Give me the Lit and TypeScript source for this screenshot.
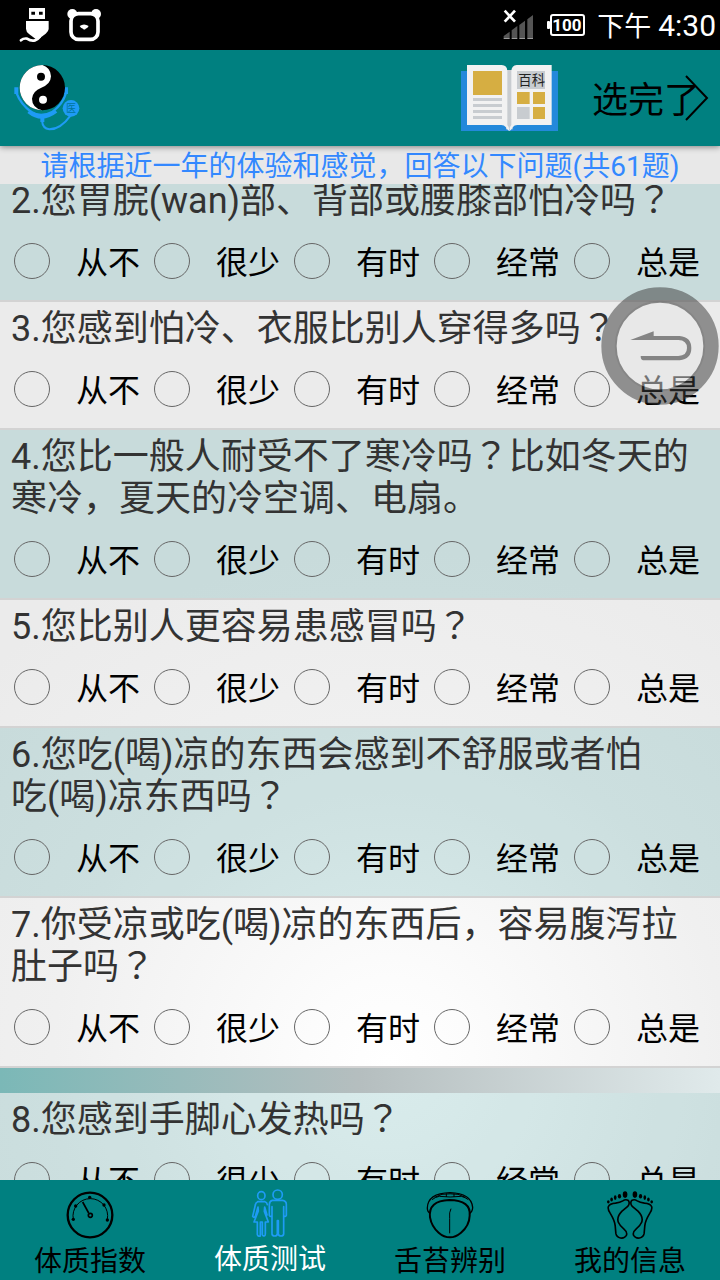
import { LitElement, html, svg, css } from "lit";
import { customElement, state, query } from "lit/decorators.js";
import { classMap } from "lit/directives/class-map.js";

interface Question {
  no: number;
  text: string;
  group?: boolean;
}

const OPTIONS = ["从不", "很少", "有时", "经常", "总是"];

const QUESTIONS: Question[] = [
  { no: 2, text: "您胃脘(wan)部、背部或腰膝部怕冷吗？" },
  { no: 3, text: "您感到怕冷、衣服比别人穿得多吗？" },
  { no: 4, text: "您比一般人耐受不了寒冷吗？比如冬天的寒冷，夏天的冷空调、电扇。" },
  { no: 5, text: "您比别人更容易患感冒吗？" },
  { no: 6, text: "您吃(喝)凉的东西会感到不舒服或者怕\n吃(喝)凉东西吗？" },
  { no: 7, text: "你受凉或吃(喝)凉的东西后，容易腹泻拉肚子吗？" },
  { no: 8, text: "您感到手脚心发热吗？", group: true },
];

/** Sets question marks in the middle of their em square. */
const centred = (text: string) =>
  text.split(/(？)/).map((part) => (part === "？" ? html`<span class="mark">${part}</span>` : part));

const usbIcon = svg`<svg width="30" height="34" viewBox="57 24 90 102" aria-hidden="true">
  <path fill="#fff" fill-rule="evenodd" d="M87 24h48v33H87zM94 35v9h11v-9zM117 35v9h11v-9z"/>
  <path fill="#fff" d="M78 63h68v24q0 6-9 14l-22 17-8-1-20-15q-9-7-9-16z"/>
  <path fill="none" stroke="#fff" stroke-width="8" stroke-linecap="round" d="M63 121q8-7 18-5 12 8 24 5 8-2 14-10"/>
</svg>`;

const bearIcon = svg`<svg width="34" height="34" viewBox="200 26 102 100" aria-hidden="true">
  <circle cx="216" cy="43" r="15" fill="#fff"/><circle cx="287" cy="43" r="15" fill="#fff"/>
  <rect x="212" y="42" width="81" height="77" rx="22" fill="#000" stroke="#fff" stroke-width="11"/>
  <path fill="#fff" d="M238 79q13-9 27 0-3 6-9 8-4 5-8 0-7-2-10-8z"/>
</svg>`;

const signalIcon = svg`<svg width="32" height="32" viewBox="188 28 96 96" aria-hidden="true">
  <g fill="#555"><path d="M190 114v-5l18-13v18zM214 114V92l17-13v35zM237 114V76l17-13v51zM261 114V59l17-13v68z"/></g>
  <path d="M190 116h18M214 116h17M237 116h17M261 116h17" stroke="#bbb" stroke-width="3"/>
  <path d="M193 33l31 33M224 33l-31 33" stroke="#fff" stroke-width="8"/>
</svg>`;

const batteryIcon = svg`<svg width="38" height="24" viewBox="0 0 38 24" aria-hidden="true">
  <rect x="4" y="2" width="33" height="20" rx="2" fill="none" stroke="#fff" stroke-width="2"/>
  <rect x="0" y="8" width="3" height="8" rx="1" fill="#fff"/>
  <text x="20" y="18" text-anchor="middle" class="pct">100</text>
</svg>`;

const logoIcon = svg`<svg width="66" height="66" viewBox="40 197 198 198" aria-hidden="true">
  <g fill="none" stroke="#1e9bf5">
    <path stroke-width="12" d="M47 264v20M196 264v20"/>
    <path stroke-width="7" d="M48 282q12 32 44 56 28 18 64-1 30-22 40-56"/>
    <path stroke-width="12" d="M84 336q40 32 82-1"/>
    <path stroke-width="12" d="M125 354v14"/>
    <path stroke-width="6" d="M124 364q2 24 22 26 34 0 64-42"/>
  </g>
  <circle cx="125" cy="265" r="68"/>
  <path fill="#fff" d="M125 197A68 68 0 0 0 125 333Q94 325 94 298Q96 275 122 265Q150 255 151 231Q150 205 125 197z"/>
  <circle cx="121" cy="232" r="12"/><circle cx="127" cy="301" r="12" fill="#fff"/>
  <circle cx="211" cy="327" r="25" fill="#1e9bf5"/>
  <text x="211" y="338" text-anchor="middle" class="seal">医</text>
</svg>`;

const bookIcon = svg`<svg width="97" height="66" viewBox="63 192 291 198" aria-hidden="true">
  <path fill="#2389db" d="M63 210h291v180H63z"/>
  <path fill="#c8ccd0" d="M198 207h20v178h-20z"/>
  <path fill="#f2f2f2" d="M81 192h104q16 1 17 17v163q6 5 6 18-5-2-10-11-6-7-14-7H81zM335 192H230q-15 2-16 17v163q-6 5-6 18 5-2 10-11 5-7 14-7h103z"/>
  <path fill="#d6ae42" d="M99 210h87v72H99zM231 273h38v36h-38zM279 273h36v36h-36zM279 318h36v36h-36z"/>
  <path fill="#c8ccd0" d="M99 291h87v9H99zM99 309h87v9H99zM99 327h87v9H99zM99 345h87v9H99zM231 210h84v54h-84zM231 318h38v36h-38z"/>
  <text x="275" y="252" text-anchor="middle" class="wiki">百科</text>
</svg>`;

const chevronIcon = svg`<svg class="chevron" width="24" height="48" viewBox="0 0 24 48" aria-hidden="true">
  <path d="M1 2L22 24 1 46" fill="none" stroke="#000" stroke-width="2"/>
</svg>`;

const gaugeIcon = svg`<svg width="48" height="48" viewBox="199 424 144 144" aria-hidden="true">
  <g fill="none" stroke="currentColor">
    <circle cx="271" cy="496" r="67" stroke-width="7"/>
    <path stroke-width="3" d="M221 509a52 52 0 1 1 102 0"/>
    <path stroke-width="5" d="M249 457l18 33"/>
    <circle cx="272" cy="497" r="6" stroke-width="5"/>
  </g>
  <g fill="currentColor"><circle cx="221" cy="509" r="5"/><circle cx="228" cy="469" r="5"/><circle cx="270" cy="443" r="5"/><circle cx="313" cy="466" r="5"/><circle cx="323" cy="511" r="5"/></g>
</svg>`;

const coupleIcon = svg`<svg width="48" height="48" viewBox="738 416 144 144" aria-hidden="true">
  <g fill="none" stroke="#1e9bf5" stroke-width="5" stroke-linejoin="round" stroke-linecap="round">
    <ellipse cx="784" cy="436" rx="11" ry="12"/><circle cx="833" cy="433" r="14"/>
    <path d="M773 454q-6 2-7 10l-8 34q4 6 8 0l8-28 1 12-13 33h10v38q1 5 8 5 1 0 1-5v-36M781 515h6v38q1 5 7 3 2-1 2-6v-35h9l-12-32 1-13 7 24M773 454h22q6 2 7 9"/>
    <path d="M817 450h30q12 1 12 12v33q-4 7-8 0v-26 82q-1 6-8 6t-8-6v-40h-3v40q-1 6-8 6t-8-6v-82 26q-4 7-8 0v-33q1-11 9-12"/>
  </g>
</svg>`;

const tongueIcon = svg`<svg width="48" height="48" viewBox="196 421 144 144" aria-hidden="true">
  <g fill="none" stroke="currentColor" stroke-width="4">
    <path d="M209 488q-9-4-9-16 1-44 68-46 64 2 68 44 0 13-9 18"/>
    <path stroke-width="6" d="M208 500q-6-50 58-52 66 1 61 47-1 30-26 51-17 14-33 14-18 0-34-14-21-18-26-46z"/>
    <path stroke-width="3" d="M214 447q10-8 22-10 32 4 66 0 12 3 21 10M222 440l22-9q25-3 48 0l22 9M257 428v11M280 428v11"/>
    <path stroke-width="3" d="M271 474q-6 10-4 30v44"/>
  </g>
</svg>`;

const foot = () => svg`
  <path fill="none" stroke="currentColor" stroke-width="5" d="M745 470q4-10 22-11 14-2 22-7 9-6 17-1 6 8-2 18l-18 15q-17 18-10 34 4 10 16 19 12 10 8 20-6 10-18 8-12-3-14-14l-2-23q-1-15-15-38-8-12-6-20z"/>
  <g fill="currentColor"><ellipse cx="796" cy="433" rx="7" ry="10"/><ellipse cx="779" cy="438" rx="5" ry="7"/><ellipse cx="766" cy="442" rx="4" ry="7"/><ellipse cx="755" cy="448" rx="4" ry="6"/><ellipse cx="745" cy="455" rx="4" ry="5"/></g>`;

const feetIcon = svg`<svg width="48" height="48" viewBox="739 422 144 146" aria-hidden="true">
  ${foot()}
  <g transform="matrix(-1 0 0 1 1622 0)">${foot()}</g>
</svg>`;

const backIcon = svg`<svg width="118" height="118" viewBox="33 21 354 354" aria-hidden="true">
  <circle cx="210" cy="198" r="131" fill="#e6e6e6" fill-opacity=".5"/>
  <circle cx="210" cy="198" r="153" fill="none" stroke="#3c3c3c" stroke-opacity=".52" stroke-width="46"/>
  <circle cx="210" cy="198" r="133" fill="none" stroke="#3c3c3c" stroke-opacity=".1" stroke-width="5"/>
  <path fill="#848484" d="M121 180l70-26v14h78q35 3 35 36t-35 37H159q-7-2-7-13h113q26-1 26-24t-26-24z"/>
</svg>`;

const TABS = [
  { label: "体质指数", icon: gaugeIcon },
  { label: "体质测试", icon: coupleIcon },
  { label: "舌苔辨别", icon: tongueIcon },
  { label: "我的信息", icon: feetIcon },
];

@customElement("question-row")
class QuestionRow extends LitElement {
  static properties = { question: { attribute: false } };
  declare question: Question;

  static styles = css`
    :host { display: block; }
    fieldset { margin: 0; padding: 6px 0 0; border: 0; min-width: 0; }
    legend {
      float: left;
      width: 100%;
      box-sizing: border-box;
      padding: 0 11px;
      font-size: 36px;
      line-height: 42px;
      color: #333;
      white-space: pre-line;
    }
    .mark { font-family: "Noto Sans CJK TC", sans-serif; line-height: 0; }
    .options {
      clear: both;
      display: grid;
      grid-template-columns: repeat(5, 1fr);
      align-items: center;
      height: 78px;
      padding-right: 20px;
    }
    label {
      display: flex;
      align-items: center;
      gap: 26px;
      padding-left: 14px;
      font-size: 32px;
      line-height: 40px;
      color: #000;
      white-space: nowrap;
    }
    label span { padding-top: 4px; }
    input {
      appearance: none;
      flex: none;
      box-sizing: border-box;
      width: 36px;
      height: 36px;
      margin: 0;
      border: 1px solid #666;
      border-radius: 50%;
    }
    input:checked { background: radial-gradient(circle, #008080 45%, transparent 50%); }
  `;

  render() {
    const { no, text } = this.question;
    return html`<fieldset>
      <legend>${no}.${centred(text)}</legend>
      <div class="options">
        ${OPTIONS.map(
          (o, i) => html`<label for="o${i}"><input id="o${i}" type="radio" name="q${no}" value=${i + 1} /><span>${o}</span></label>`
        )}
      </div>
    </fieldset>`;
  }
}

@customElement("app-root")
class AppRoot extends LitElement {
  @state() private active = 1;
  @query(".list") private list!: HTMLElement;

  static styles = css`
    :host {
      display: flex;
      flex-direction: column;
      height: 100vh;
      position: relative;
      overflow: hidden;
      font-family: Roboto, "Noto Sans CJK SC", sans-serif;
      background: radial-gradient(circle 560px at 54% 83%, #fff 0, #fcfcfc 15%, #f0f0f0 60%, #ebebeb 100%);
    }
    button { border: 0; padding: 0; background: none; font: inherit; color: inherit; cursor: pointer; }
    svg { display: block; flex: none; }
    .status {
      display: flex;
      align-items: center;
      height: 50px;
      flex: none;
      padding: 0 4px 0 19px;
      background: #000;
      color: #fff;
    }
    .status .left, .status .right { display: flex; align-items: center; }
    .left { gap: 18px; }
    .right { gap: 12px; margin-left: auto; }
    .clock { display: flex; align-items: baseline; gap: 7px; padding-top: 2px; font-size: 30px; line-height: 48px; white-space: nowrap; }
    .clock .half { font-size: 27px; }
    .pct { font: bold 17px Roboto, sans-serif; fill: #fff; }
    .bar {
      display: flex;
      align-items: center;
      height: 96px;
      flex: none;
      box-sizing: border-box;
      padding: 0 11px 0 14px;
      background: #008080;
      box-shadow: 0 1px 6px rgba(0, 0, 0, 0.45);
      z-index: 1;
    }
    .wiki { font: 40px "Noto Sans CJK SC", sans-serif; fill: #222; }
    .seal { font: 30px "Noto Sans CJK SC", sans-serif; fill: #00769c; }
    .book { margin-left: auto; }
    .done { position: relative; margin-left: 34px; padding: 6px 9px 0 0; font-size: 36px; line-height: 48px; color: #000; white-space: nowrap; }
    .chevron { position: absolute; right: 0; top: 3px; }
    .hint {
      flex: none;
      height: 38px;
      box-sizing: border-box;
      margin: 0;
      padding-top: 2px;
      font-size: 28px;
      font-weight: 400;
      line-height: 38px;
      text-align: center;
      color: #38f;
      background: #e8e8e8;
      white-space: nowrap;
    }
    .list { flex: 1; min-height: 0; overflow-y: auto; scrollbar-width: none; }
    .row { border-bottom: 2px solid #d3d3d3; }
    .row.tint { background: rgba(0, 128, 128, 0.15); }
    .group { height: 25px; background: linear-gradient(90deg, #7bb8b7, #b5bebf 50%, #e0eaeb); }
    nav { display: grid; grid-template-columns: repeat(4, 1fr); flex: none; height: 100px; background: #008080; }
    .tab { display: flex; flex-direction: column; align-items: center; gap: 3px; padding-top: 11px; color: #000; font-size: 28px; line-height: 40px; }
    .tab.on { color: #fff; padding-top: 9px; }
    .back { position: absolute; right: 1px; top: 287px; z-index: 2; border-radius: 50%; }
  `;

  firstUpdated() {
    customElements.whenDefined("question-row").then(() =>
      requestAnimationFrame(() => { this.list.scrollTop = 10; })
    );
  }

  render() {
    return html`
      <div class="status">
        <div class="left">${usbIcon}${bearIcon}</div>
        <div class="right">
          ${signalIcon}${batteryIcon}
          <div class="clock"><span class="half">下午</span><span>4:30</span></div>
        </div>
      </div>
      <header class="bar">
        ${logoIcon}
        <button class="book" aria-label="百科">${bookIcon}</button>
        <button class="done">选完了${chevronIcon}</button>
      </header>
      <h1 class="hint">请根据近一年的体验和感觉，回答以下问题(共61题)</h1>
      <main class="list">
        ${QUESTIONS.map(
          (q) => html`${q.group ? html`<div class="group"></div>` : ""}
            <div class=${classMap({ row: true, tint: q.no % 2 === 0 })}>
              <question-row .question=${q}></question-row>
            </div>`
        )}
      </main>
      <nav>
        ${TABS.map(
          (t, i) => html`<button class=${classMap({ tab: true, on: i === this.active })} @click=${() => (this.active = i)}>
            ${t.icon}<span>${t.label}</span>
          </button>`
        )}
      </nav>
      <button class="back" aria-label="返回">${backIcon}</button>
    `;
  }
}
